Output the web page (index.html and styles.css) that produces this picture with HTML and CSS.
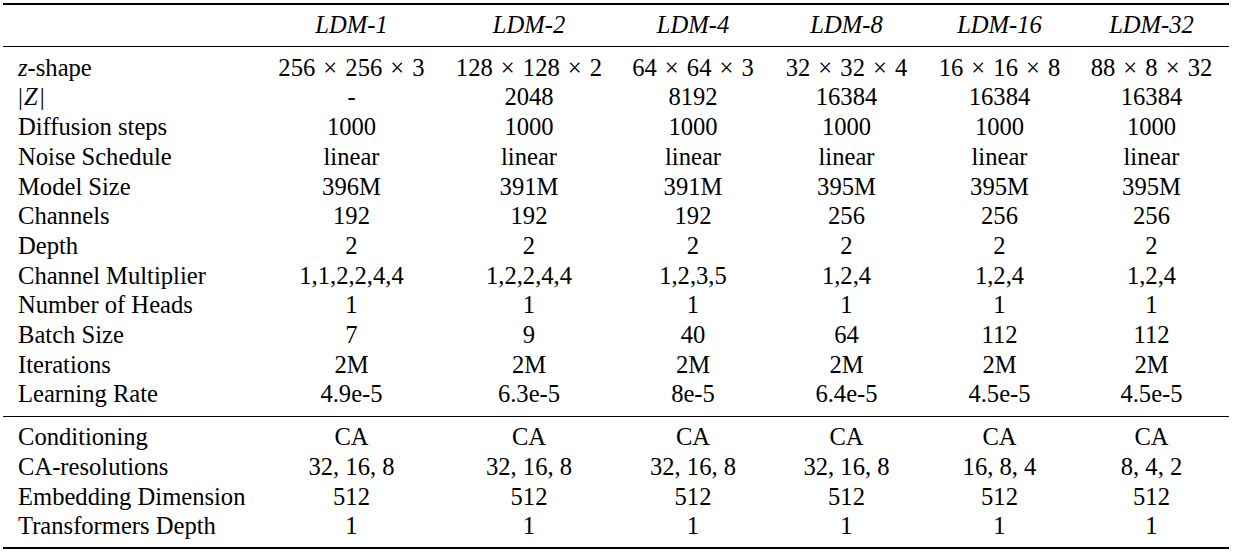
FILE: index.html
```html
<!DOCTYPE html>
<html lang="en">
<head>
<meta charset="utf-8">
<title>LDM hyperparameters</title>
<link rel="stylesheet" href="styles.css">
</head>
<body>
<table class="params">
  <colgroup>
    <col class="c1"><col class="c2"><col class="c3"><col class="c4"><col class="c5"><col class="c6"><col class="c7">
  </colgroup>
  <thead>
    <tr>
      <th></th>
      <th>LDM-1</th>
      <th>LDM-2</th>
      <th>LDM-4</th>
      <th>LDM-8</th>
      <th>LDM-16</th>
      <th>LDM-32</th>
    </tr>
  </thead>
  <tbody class="main">
    <tr>
      <td><span class="mi">z</span>-shape</td>
      <td>256<span class="op">×</span>256<span class="op">×</span>3</td>
      <td>128<span class="op">×</span>128<span class="op">×</span>2</td>
      <td>64<span class="op">×</span>64<span class="op">×</span>3</td>
      <td>32<span class="op">×</span>32<span class="op">×</span>4</td>
      <td>16<span class="op">×</span>16<span class="op">×</span>8</td>
      <td>88<span class="op">×</span>8<span class="op">×</span>32</td>
    </tr>
    <tr>
      <td>|<span class="cal">Z</span>|</td>
      <td>-</td><td>2048</td><td>8192</td><td>16384</td><td>16384</td><td>16384</td>
    </tr>
    <tr>
      <td>Diffusion steps</td>
      <td>1000</td><td>1000</td><td>1000</td><td>1000</td><td>1000</td><td>1000</td>
    </tr>
    <tr>
      <td>Noise Schedule</td>
      <td>linear</td><td>linear</td><td>linear</td><td>linear</td><td>linear</td><td>linear</td>
    </tr>
    <tr>
      <td>Model Size</td>
      <td>396M</td><td>391M</td><td>391M</td><td>395M</td><td>395M</td><td>395M</td>
    </tr>
    <tr>
      <td>Channels</td>
      <td>192</td><td>192</td><td>192</td><td>256</td><td>256</td><td>256</td>
    </tr>
    <tr>
      <td>Depth</td>
      <td>2</td><td>2</td><td>2</td><td>2</td><td>2</td><td>2</td>
    </tr>
    <tr>
      <td>Channel Multiplier</td>
      <td>1,1,2,2,4,4</td><td>1,2,2,4,4</td><td>1,2,3,5</td><td>1,2,4</td><td>1,2,4</td><td>1,2,4</td>
    </tr>
    <tr>
      <td>Number of Heads</td>
      <td>1</td><td>1</td><td>1</td><td>1</td><td>1</td><td>1</td>
    </tr>
    <tr>
      <td>Batch Size</td>
      <td>7</td><td>9</td><td>40</td><td>64</td><td>112</td><td>112</td>
    </tr>
    <tr>
      <td>Iterations</td>
      <td>2M</td><td>2M</td><td>2M</td><td>2M</td><td>2M</td><td>2M</td>
    </tr>
    <tr>
      <td>Learning Rate</td>
      <td>4.9e-5</td><td>6.3e-5</td><td>8e-5</td><td>6.4e-5</td><td>4.5e-5</td><td>4.5e-5</td>
    </tr>
  </tbody>
  <tbody class="cond">
    <tr>
      <td>Conditioning</td>
      <td>CA</td><td>CA</td><td>CA</td><td>CA</td><td>CA</td><td>CA</td>
    </tr>
    <tr>
      <td>CA-resolutions</td>
      <td>32, 16, 8</td><td>32, 16, 8</td><td>32, 16, 8</td><td>32, 16, 8</td><td>16, 8, 4</td><td>8, 4, 2</td>
    </tr>
    <tr>
      <td>Embedding Dimension</td>
      <td>512</td><td>512</td><td>512</td><td>512</td><td>512</td><td>512</td>
    </tr>
    <tr>
      <td>Transformers Depth</td>
      <td>1</td><td>1</td><td>1</td><td>1</td><td>1</td><td>1</td>
    </tr>
  </tbody>
</table>
</body>
</html>
```

FILE: styles.css
```css
html, body {
  margin: 0;
  padding: 0;
  background: #ffffff;
}

body {
  padding: 3px 0 0 3px;
  font-family: "Liberation Serif", "Times New Roman", serif;
  font-size: 24.6px;
  color: #000000;
}

.params {
  border-collapse: separate;
  border-spacing: 0;
  table-layout: fixed;
  width: 1226px;
  line-height: 29.7px;
}

.c1 { width: 260px; }
.c2 { width: 177px; }
.c3 { width: 178px; }
.c4 { width: 150px; }
.c5 { width: 157px; }
.c6 { width: 149px; }
.c7 { width: 155px; }

.params th,
.params td {
  padding: 0;
  text-align: center;
  white-space: nowrap;
  font-weight: normal;
}

.params th:first-child,
.params td:first-child {
  text-align: left;
  padding-left: 15px;
}

.params th {
  font-style: italic;
  border-top: 2px solid #000;
  border-bottom: 1px solid #000;
  padding-top: 5px;
  padding-bottom: 6px;
}

.main tr:first-child td {
  padding-top: 6px;
}

.main tr:last-child td {
  padding-bottom: 7px;
  border-bottom: 1px solid #000;
}

.cond tr:first-child td {
  padding-top: 5px;
}

.cond tr:last-child td {
  padding-bottom: 6px;
  border-bottom: 2px solid #000;
}

.mi {
  font-style: italic;
}

.cal {
  font-style: italic;
  padding: 0 2px 0 1px;
}

.op {
  margin: 0 0.33em;
}
```
